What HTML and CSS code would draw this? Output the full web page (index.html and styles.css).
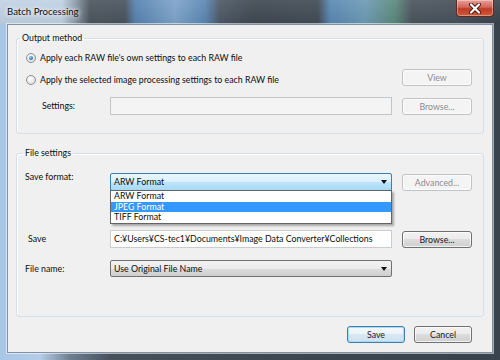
FILE: index.html
```html
<!doctype html>
<html>
<head>
  <title>Batch Processing</title>
  <link rel="stylesheet" href="styles.css">
</head>
<body>
  <div class="window">
    <header class="titlebar">
      <span class="title">Batch Processing</span>
      <button class="close" aria-label="Close">
        <svg width="14" height="11" viewBox="0 0 14 11">
          <path d="M3 1.5 L11 9.5 M11 1.5 L3 9.5" stroke="#4a1a14" stroke-width="4" stroke-linecap="round"/>
          <path d="M3 1.5 L11 9.5 M11 1.5 L3 9.5" stroke="#fff" stroke-width="2.2" stroke-linecap="round"/>
        </svg>
      </button>
    </header>

    <div class="frame">
      <main class="client">
        <fieldset class="group output">
          <legend>Output method</legend>
          <label class="radio first"><span class="dot checked"></span>Apply each RAW file's own settings to each RAW file</label>
          <div class="row">
            <label class="radio wide"><span class="dot"></span>Apply the selected image processing settings to each RAW file</label>
            <button class="btn disabled">View</button>
          </div>
          <div class="row spaced">
            <span class="label indent">Settings:</span>
            <div class="field disabled"></div>
            <button class="btn disabled">Browse...</button>
          </div>
        </fieldset>

        <fieldset class="group files">
          <legend>File settings</legend>
          <div class="row">
            <span class="label raised">Save format:</span>
            <div class="combo hot">
              <span>ARW Format</span>
              <i class="arrow"></i>
              <ul class="dropdown">
                <li>ARW Format</li>
                <li class="selected">JPEG Format</li>
                <li>TIFF Format</li>
              </ul>
            </div>
            <button class="btn disabled">Advanced...</button>
          </div>
          <div class="row far">
            <span class="label nudge">Save</span>
            <div class="field">C:¥Users¥CS-tec1¥Documents¥Image Data Converter¥Collections</div>
            <button class="btn">Browse...</button>
          </div>
          <div class="row near">
            <span class="label">File name:</span>
            <div class="combo">
              <span>Use Original File Name</span>
              <i class="arrow"></i>
            </div>
          </div>
        </fieldset>

        <div class="actions">
          <button class="btn default">Save</button>
          <button class="btn">Cancel</button>
        </div>
      </main>
    </div>
  </div>
</body>
</html>
```

FILE: styles.css
```css
* {
  box-sizing: border-box;
  margin: 0;
  padding: 0;
}

body {
  width: 500px;
  height: 360px;
  overflow: hidden;
  font-family: "Lato", "Open Sans", sans-serif;
  font-size: 8.8px;
  line-height: 12px;
  color: #0d0d0d;
}

.window {
  display: flex;
  flex-direction: column;
  height: 360px;
  background: linear-gradient(90deg, #a8c6e6 0, #b4cde8 40px, #6f7f90 70px, #46515c 110px, #3c4650 300px, #39434d 500px);
}

/* glass title bar with the blurred desktop behind it */
.titlebar {
  display: flex;
  align-items: flex-start;
  height: 24px;
  background:
    linear-gradient(180deg, rgba(255,255,255,.08), rgba(0,0,0,.05)),
    linear-gradient(90deg, #c2d3e4 0, #c0d2e4 62px, #8e9cab 75px, #4d565f 90px, #4a545e 125px, #5682b0 135px, #7ea5cb 175px, #5c88b4 205px, #4d5965 220px, #3f4852 255px, #424c56 318px, #5a88b4 330px, #6e9bb5 365px, #5c8a7c 395px, #4b555e 412px, #47515b 455px, #3b444d 500px);
}

.title {
  padding: 6px 0 0 7px;
  font-size: 9.6px;
  color: #111;
  text-shadow: 0 0 4px #fff, 0 0 6px rgba(255,255,255,.8);
}

.close {
  margin-left: auto;
  margin-right: 6px;
  width: 38px;
  height: 17px;
  display: flex;
  align-items: center;
  justify-content: center;
  border: 1px solid #5b2a22;
  border-top: none;
  border-radius: 0 0 4px 4px;
  background: linear-gradient(180deg, #e8a196 0, #d2655a 45%, #c03a25 55%, #cf5c3c 100%);
  box-shadow: inset 0 0 0 1px rgba(255,255,255,.35);
}

.frame {
  flex: 1;
  display: flex;
  padding: 0 8px 7px 7px;
}

.client {
  flex: 1;
  display: flex;
  flex-direction: column;
  background: #f0f0f0;
  border: 1px solid #8091a3;
  box-shadow: 0 0 0 1px rgba(255,255,255,.55);
  padding-top: 7px;
}

.group {
  margin: 0 8px 0 8px;
  border: 1px solid #d5dfe5;
  border-radius: 3px;
  box-shadow: inset 1px 1px 0 #fff;
  padding: 0 11px 18px 9px;
}

.group legend {
  padding: 0 2px;
  height: 12px;
}

.output legend { margin-left: -6px }
.files legend { margin-left: -3px }

.files {
  margin-top: 13px;
  padding-top: 14px;
  padding-bottom: 39px;
}

.row {
  display: grid;
  grid-template-columns: 74px 282px 70px;
  column-gap: 10px;
  align-items: center;
}

.row.spaced { margin-top: 11px }
.row.far { margin-top: 39px }
.row.near { margin-top: 12px }

.output .row:first-of-type { margin-top: 5px }

.radio {
  display: flex;
  align-items: center;
  gap: 4px;
  white-space: nowrap;
}

.radio.first { margin-top: 8px }

.radio.wide {
  grid-column: 1 / 3;
  align-self: start;
  margin-top: 5px;
}

.dot {
  width: 10px;
  height: 10px;
  border-radius: 50%;
  border: 1px solid #8c8f94;
  background: radial-gradient(circle at 40% 35%, #fff 0, #e6e6e6 60%, #cfcfcf 100%);
  position: relative;
}

.dot.checked::after {
  content: "";
  position: absolute;
  left: 2px;
  top: 2px;
  width: 4px;
  height: 4px;
  border-radius: 50%;
  background: radial-gradient(circle at 40% 35%, #8fd0f5 0, #2a7fc4 60%, #15518c 100%);
}

.label.indent { padding-left: 16px }
.label.nudge { padding-left: 2px }
.label.raised {
  align-self: start;
  margin-top: -2px;
  margin-left: -1px;
}
.row.near .label { margin-left: -1px }

.field {
  height: 18px;
  border: 1px solid #c9cdd2;
  background: #fff;
  padding: 2px 3px;
  white-space: nowrap;
  overflow: hidden;
}

.field.disabled {
  background: #f4f4f4;
  border-color: #c3c6c9;
}

.combo {
  position: relative;
  height: 18px;
  border: 1px solid #707070;
  border-radius: 2px;
  padding: 2px 3px;
  background: linear-gradient(180deg, #f2f2f2 0, #ebebeb 50%, #dddddd 50%, #cfcfcf 100%);
}

.row.near .combo { height: 17px }

.combo.hot {
  border-color: #3c7fb1;
  background: linear-gradient(180deg, #eaf6fd 0, #d9f0fc 50%, #bee6fd 50%, #a7d9f5 100%);
}

.arrow {
  position: absolute;
  right: 4px;
  top: 6px;
  border-left: 3.5px solid transparent;
  border-right: 3.5px solid transparent;
  border-top: 4px solid #111;
}

.dropdown {
  list-style: none;
  position: absolute;
  left: -1px;
  right: -1px;
  top: 16px;
  background: #fff;
  border: 1px solid #646464;
  box-shadow: 2px 2px 2px rgba(0,0,0,.3);
  z-index: 2;
}

.dropdown li {
  height: 10.5px;
  line-height: 10.5px;
  padding-left: 3px;
}

.dropdown li.selected {
  background: #3399ff;
  color: #fff;
}

.btn {
  height: 17px;
  font-family: inherit;
  font-size: inherit;
  color: #1a1a1a;
  border: 1px solid #707070;
  border-radius: 3px;
  background: linear-gradient(180deg, #f2f2f2 0, #ebebeb 50%, #dddddd 50%, #cfcfcf 100%);
  box-shadow: inset 0 0 0 1px rgba(255,255,255,.7);
}

.btn.disabled {
  color: #8d8d8d;
  border-color: #c0c3c6;
  background: #f4f4f4;
}

.btn.default {
  border-color: #3c7fb1;
  background: linear-gradient(180deg, #f4f9fc 0, #e9f3f9 50%, #d8e8f2 50%, #cde2ee 100%);
  box-shadow: inset 0 0 0 1px #a9d9f5;
}

.actions {
  display: flex;
  justify-content: flex-end;
  gap: 9px;
  margin-top: 9px;
  padding-right: 20px;
}

.actions .btn { width: 58px }
```
